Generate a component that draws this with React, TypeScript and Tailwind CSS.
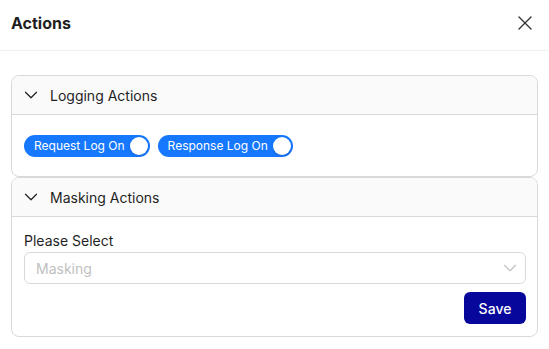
import { X, ChevronDown } from "lucide-react"

function Toggle({ label }: { label: string }) {
  return (
    <button className="flex items-center h-[22px] rounded-full bg-[#1677ff] pl-[10px] pr-[2px] gap-[5px] text-white text-[12px] leading-none">
      <span>{label}</span>
      <span className="w-[18px] h-[18px] rounded-full bg-white shadow-sm" />
    </button>
  )
}

function Section({ title, children, bodyClass }: { title: string; children: React.ReactNode; bodyClass: string }) {
  return (
    <div className="border border-[#d9d9d9] rounded-[8px] overflow-hidden">
      <div className="flex items-center h-[39px] bg-[#fafafa] border-b border-[#d9d9d9] pl-[8px] text-[14px] text-[#1f1f1f]">
        <ChevronDown className="w-[22px] h-[22px] mr-[8px]" strokeWidth={1.3} />
        <span>{title}</span>
      </div>
      <div className={bodyClass}>{children}</div>
    </div>
  )
}

export default function App() {
  return (
    <div className="w-[549px] h-[349px] bg-white" style={{ fontFamily: "Inter, 'Noto Sans', sans-serif" }}>
      {/* Header */}
      <div className="flex items-center justify-between h-[51px] px-[11px] pb-[4px] border-b border-[#f0f0f0]">
        <h1 className="text-[16px] font-bold text-[#1f1f1f]">Actions</h1>
        <X className="w-[24px] h-[24px] text-[#333] mr-[1px]" strokeWidth={1.4} />
      </div>

      <div className="px-[11px] pt-[24px] flex flex-col">
        <Section title="Logging Actions" bodyClass="flex items-center gap-[8px] px-[12px] h-[61px]">
          <Toggle label="Request Log On" />
          <Toggle label="Response Log On" />
        </Section>

        <Section title="Masking Actions" bodyClass="pl-[12px] pr-[11px] pt-[13px] pb-[12px] flex flex-col">
          <label className="text-[14px] leading-[22px] text-[#1f1f1f]">Please Select</label>
          <div className="flex items-center justify-between h-[32px] border border-[#d9d9d9] rounded-[6px] pl-[11px] pr-[4px]">
            <span className="text-[14px] text-[#bfbfbf]">Masking</span>
            <ChevronDown className="w-[22px] h-[22px] text-[#bfbfbf]" strokeWidth={1.2} />
          </div>
          <div className="flex justify-end mt-[8px]">
            <button className="h-[32px] w-[62px] rounded-[6px] bg-[#07079c] text-white text-[14px] font-medium">
              Save
            </button>
          </div>
        </Section>
      </div>
    </div>
  )
}
